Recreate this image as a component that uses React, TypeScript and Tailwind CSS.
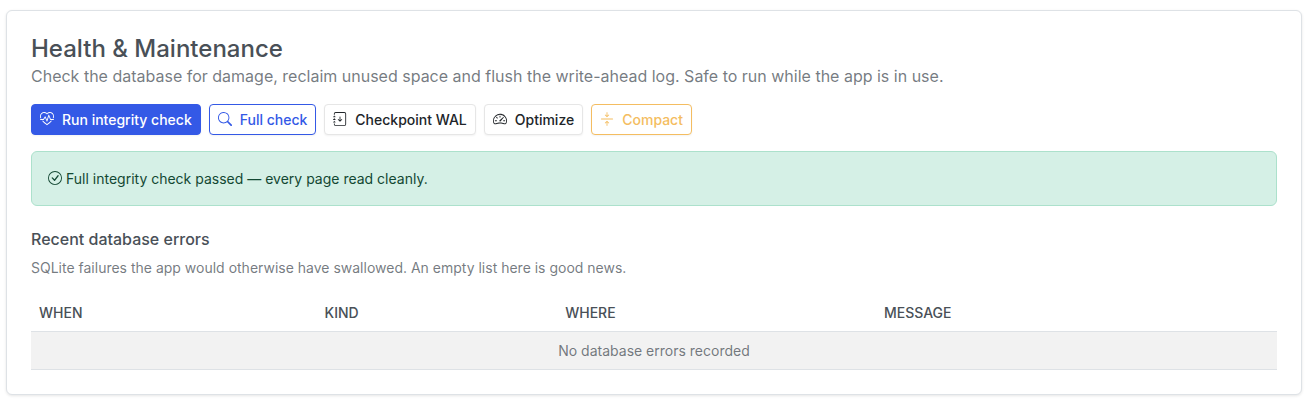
import type { ReactNode } from "react";
import {
  BsArrowsCollapse,
  BsCheckCircle,
  BsHeartPulse,
  BsJournalArrowDown,
  BsSearch,
  BsSpeedometer2,
} from "react-icons/bs";

const variants = {
  primary: "border-[#3459e6] bg-[#3459e6] text-white",
  outlinePrimary: "border-[#3459e6] bg-white text-[#3459e6]",
  light: "border-[#e6e6e6] bg-white text-[#212529]",
  outlineWarning: "border-[#f4bd61] bg-white text-[#f4bd61]",
};

type ActionButtonProps = {
  icon: ReactNode;
  label: string;
  variant: keyof typeof variants;
};

const ActionButton = ({ icon, label, variant }: ActionButtonProps) => (
  <button
    type="button"
    className={`inline-flex items-start gap-2 rounded-sm border px-2 py-1 text-sm/[21px] font-medium shadow-[0_1px_2px_rgba(0,0,0,0.05)] ${variants[variant]}`}
  >
    <span className="pt-[3px]">{icon}</span>
    {label}
  </button>
);

const columns = ["When", "Kind", "Where", "Message"];

const App = () => {
  return (
    <main className="bg-white pt-[10px] pr-2 pb-[5px] pl-[6px] font-['Inter',sans-serif] text-[#495057]">
      <section className="rounded-md border border-[#dee2e6] bg-white p-6 shadow-[0_1px_3px_rgba(0,0,0,0.1)]">
        <h1 className="pb-0.5 text-2xl/[27px] font-medium">Health &amp; Maintenance</h1>
        <p className="mb-4 text-base text-[#495057]/75">
          Check the database for damage, reclaim unused space and flush the write-ahead log. Safe to run while the app
          is in use.
        </p>

        <div className="mb-4 flex flex-wrap gap-2">
          <ActionButton variant="primary" icon={<BsHeartPulse size={14} />} label="Run integrity check" />
          <ActionButton variant="outlinePrimary" icon={<BsSearch size={14} />} label="Full check" />
          <ActionButton variant="light" icon={<BsJournalArrowDown size={14} />} label="Checkpoint WAL" />
          <ActionButton variant="light" icon={<BsSpeedometer2 size={14} />} label="Optimize" />
          <ActionButton variant="outlineWarning" icon={<BsArrowsCollapse size={14} />} label="Compact" />
        </div>

        <div
          role="status"
          className="mb-6 flex items-start gap-1 rounded-md border border-[#ace1cc] bg-[#d5f0e6] p-4 text-sm/[21px] text-[#134833]"
        >
          <span className="pt-[3px]">
            <BsCheckCircle size={14} />
          </span>
          Full integrity check passed — every page read cleanly.
        </div>

        <h2 className="mb-2 text-base/[19px] font-medium">Recent database errors</h2>
        <p className="mb-4 text-sm/[21px] text-[#495057]/75">
          SQLite failures the app would otherwise have swallowed. An empty list here is good news.
        </p>

        <table className="w-full border-collapse text-sm/[21px]">
          <thead>
            <tr className="border-b border-[#dee2e6]">
              {columns.map((column) => (
                <th key={column} scope="col" className="p-2 text-left font-medium uppercase">
                  {column}
                </th>
              ))}
            </tr>
          </thead>
          <tbody>
            <tr className="border-b border-[#dee2e6] bg-[#f2f2f2]">
              <td colSpan={columns.length} className="p-2 text-center text-[#495057]/75">
                No database errors recorded
              </td>
            </tr>
          </tbody>
        </table>
      </section>
    </main>
  );
};

export default App;
